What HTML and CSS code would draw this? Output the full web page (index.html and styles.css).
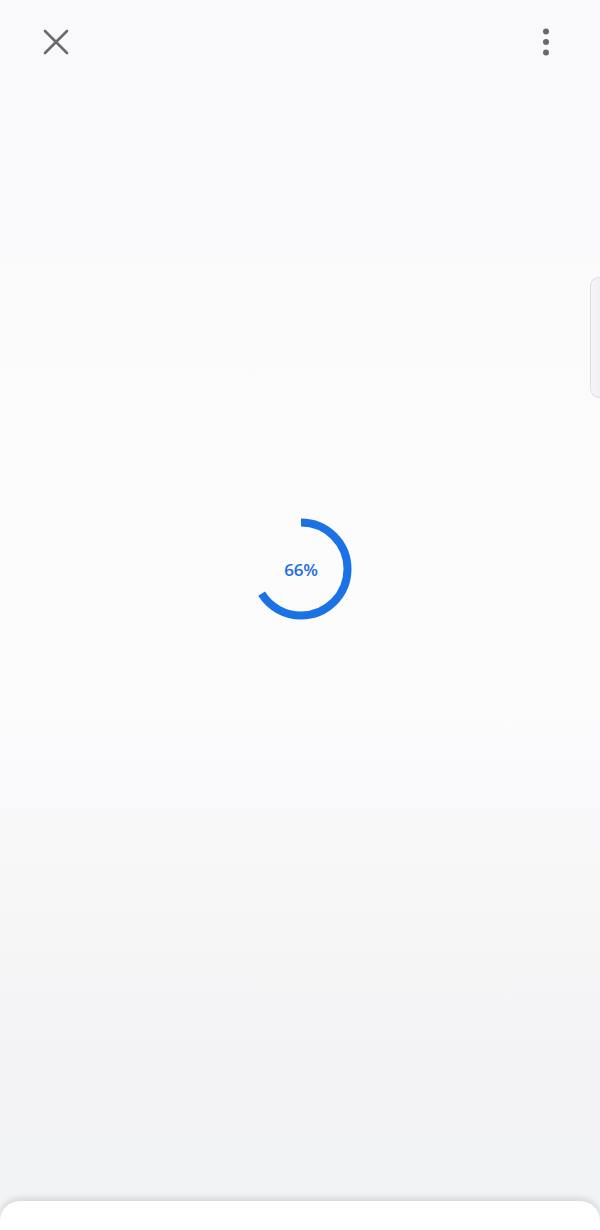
FILE: index.html
```html
<!DOCTYPE html>
<html lang="en">
<head>
<meta charset="utf-8">
<title>Loading</title>
<link rel="stylesheet" href="styles.css">
</head>
<body>
<div class="screen">
  <header class="toolbar">
    <button class="icon-btn" aria-label="Close">
      <svg width="26" height="26" viewBox="0 0 26 26"><path d="M2 2 L24 24 M24 2 L2 24" stroke="#68686d" stroke-width="2.6" stroke-linecap="round" fill="none"/></svg>
    </button>
    <button class="icon-btn" aria-label="More options">
      <svg width="8" height="28" viewBox="0 0 8 28"><circle cx="4" cy="3.5" r="3" fill="#68686d"/><circle cx="4" cy="14" r="3" fill="#68686d"/><circle cx="4" cy="24.5" r="3" fill="#68686d"/></svg>
    </button>
  </header>
  <main class="content">
    <div class="handle"></div>
    <div class="progress">
      <svg class="ring" width="104" height="104" viewBox="0 0 104 104">
        <circle cx="52" cy="52" r="46.5" fill="none" stroke="#1b72e4" stroke-width="8" stroke-dasharray="192.8 400" transform="rotate(-90 52 52)"/>
      </svg>
      <span class="pct">66%</span>
    </div>
  </main>
  <div class="sheet"></div>
</div>
</body>
</html>
```

FILE: styles.css
```css
* { box-sizing: border-box; }
html, body { margin: 0; padding: 0; }
body {
  width: 600px;
  height: 1230px;
  overflow: hidden;
  font-family: "Open Sans", "Noto Sans", sans-serif;
}
.screen {
  position: relative;
  width: 600px;
  height: 1230px;
  background: linear-gradient(to bottom, #f9f8fa 0px, #f9f8fa 230px, #fcfbfc 290px, #fcfcfd 700px, #faf9fb 760px, #f7f7f8 900px, #f3f3f5 1050px, #f2f3f5 1200px);
  display: flex;
  flex-direction: column;
}
.toolbar {
  height: 84px;
  display: flex;
  justify-content: space-between;
  align-items: center;
  padding: 0 40px 0 32px;
}
.icon-btn {
  background: none;
  border: 0;
  padding: 0;
  width: 48px;
  height: 48px;
  display: flex;
  align-items: center;
  justify-content: center;
}
.toolbar .icon-btn:last-child { width: 28px; }
.content {
  position: relative;
  flex: 1;
}
.handle {
  position: absolute;
  right: -8px;
  top: 193px;
  width: 18px;
  height: 121px;
  border: 1.5px solid #dcdcdf;
  border-radius: 9px;
  background: linear-gradient(to right, #f6f6f8, #ececef);
}
.progress {
  position: absolute;
  left: 249px;
  top: 433px;
  width: 104px;
  height: 104px;
  display: flex;
  align-items: center;
  justify-content: center;
}
.ring { position: absolute; left: 0; top: 0; }
.pct {
  position: relative;
  font-size: 17px;
  font-weight: 600;
  color: #1b6fdc;
  letter-spacing: -0.2px;
}
.sheet {
  position: absolute;
  left: 0;
  right: 0;
  top: 1201px;
  height: 60px;
  background: #ffffff;
  border-radius: 20px 20px 0 0;
  box-shadow: 0 -3px 6px rgba(0, 0, 0, 0.12);
}
```
